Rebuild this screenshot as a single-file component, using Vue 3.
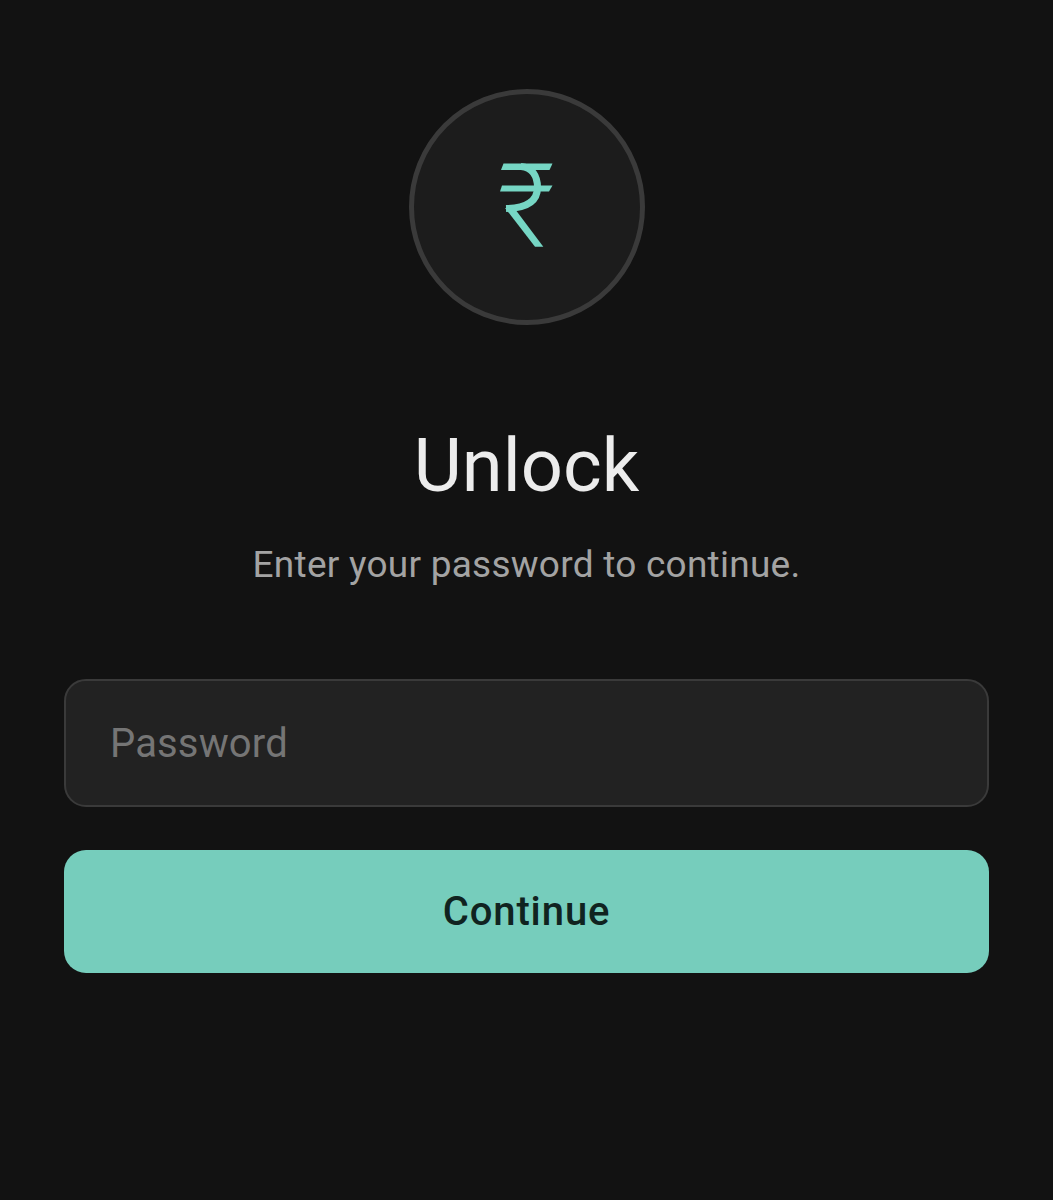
<script setup>
import { ref } from 'vue';
let password=ref('');
</script>

<template>
  <div class="pagina">
    <div class="logo">
      <svg class="rupia" width="60" height="90" viewBox="0 0 60 90">
        <path d="M6.5 1.5H55.5L52.5 8H4Z" fill="#76d6c4"/>
        <path d="M5 23.5H55.5L52 29.5H3Z" fill="#76d6c4"/>
        <path d="M24 4.5C35 5 40.5 14 40.5 25.5C40.5 38 31 46 9 46.5" fill="none" stroke="#76d6c4" stroke-width="7"/>
        <path d="M8 46L38 84.7H46.3L18 47Z" fill="#76d6c4"/>
      </svg>
    </div>
    <h1>Unlock</h1>
    <p>Enter your password to continue.</p>
    <input v-model="password" type="password" placeholder="Password">
    <button>Continue</button>
  </div>
</template>

<style scoped>
.pagina{
  height: 1200px;
  box-sizing: border-box;
  padding: 89px 64px 0;
  display: flex;
  flex-direction: column;
  align-items: center;
  background-color: #121212;
  font-family: Roboto, sans-serif;
}
.logo{
  width: 236px;
  height: 236px;
  box-sizing: border-box;
  border: 5px solid #3a3a3a;
  border-radius: 50%;
  background-color: #1c1c1c;
  display: flex;
  align-items: center;
  justify-content: center;
}
.rupia{
  display: block;
}
h1{
  margin: 97px 0 0;
  font-size: 74px;
  line-height: 88px;
  font-weight: 400;
  color: #ececec;
}
p{
  margin: 34px 0 0;
  font-size: 37px;
  line-height: 42px;
  letter-spacing: 0.25px;
  color: #a3a3a3;
}
input{
  width: 100%;
  height: 128px;
  box-sizing: border-box;
  margin-top: 93px;
  padding: 0 44px;
  border: 2px solid #3a3a3a;
  border-radius: 22px;
  background-color: #222222;
  font-family: Roboto, sans-serif;
  font-size: 40px;
  letter-spacing: 0.15px;
  color: #ececec;
  outline: none;
}
input::placeholder{
  color: #757575;
  opacity: 1;
}
button{
  width: 100%;
  height: 123px;
  margin-top: 43px;
  border-style: none;
  border-radius: 22px;
  background-color: #76cdbc;
  font-family: Roboto, sans-serif;
  font-size: 40px;
  font-weight: 500;
  letter-spacing: 0.9px;
  color: #102320;
}
</style>
